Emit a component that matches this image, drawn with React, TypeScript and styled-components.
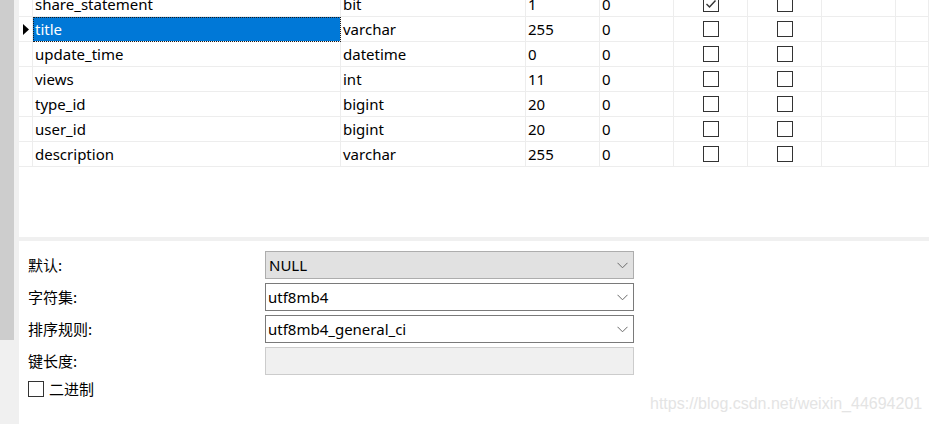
import React from "react";
import styled, { createGlobalStyle } from "styled-components";

const Global = createGlobalStyle`
  html, body { margin: 0; padding: 0; background: #f0f0f0; }
  body { width: 929px; height: 424px; overflow: hidden; font-family: "Noto Sans", "Noto Sans CJK SC", sans-serif; }
  #root { width: 929px; height: 424px; }
`;

const Frame = styled.div`
  display: flex;
  width: 929px;
  height: 424px;
  position: relative;
  overflow: hidden;
`;

const LeftStrip = styled.div`
  width: 19px;
  display: flex;
  flex-direction: column;
  flex-shrink: 0;
`;

const ScrollBlock = styled.div`
  width: 14px;
  height: 340px;
  background: #cdcdcd;
`;

const Main = styled.div`
  flex: 1;
  display: flex;
  flex-direction: column;
  gap: 4px;
`;

const GridPanel = styled.div`
  height: 237px;
  background: #ffffff;
  overflow: hidden;
`;

const GridBody = styled.div`
  margin-top: -8px;
  display: flex;
  flex-direction: column;
`;

const Row = styled.div`
  display: grid;
  grid-template-columns: 14px 308px 185px 74px 74px 74px 74px 74px 1fr;
  height: 25px;
`;

const Cell = styled.div<{ $selected?: boolean; $center?: boolean; $pad?: number }>`
  box-sizing: border-box;
  border-right: 1px solid #ededed;
  border-bottom: 1px solid #ededed;
  display: flex;
  align-items: center;
  justify-content: ${(p) => (p.$center ? "center" : "flex-start")};
  padding-left: ${(p) => p.$pad ?? 2}px;
  font-size: 15px;
  color: #000;
  white-space: nowrap;
  overflow: hidden;
  position: relative;
  ${(p) =>
    p.$selected &&
    `
    background: #0078d7;
    color: #fff;
    outline: 1px dotted #1b1b1b;
    outline-offset: -1px;
  `}
`;

const HeaderCell = styled(Cell)`
  padding-left: 4px;
`;

const Box = styled.div`
  box-sizing: border-box;
  width: 16px;
  height: 16px;
  border: 1.5px solid #333;
  background: #fff;
  display: flex;
  align-items: center;
  justify-content: center;
  flex-shrink: 0;
`;

const LowerPanel = styled.div`
  flex: 1;
  background: #ffffff;
  padding: 10px 0 0 9px;
  display: flex;
  flex-direction: column;
`;

const FormRow = styled.div`
  display: grid;
  grid-template-columns: 237px 369px;
  height: 32px;
  align-items: start;
`;

const Label = styled.div`
  font-size: 15px;
  line-height: 28px;
  height: 28px;
  color: #000;
  font-family: "Noto Sans CJK SC", sans-serif;
`;

const SelectBox = styled.div<{ $variant: "gray" | "white" | "disabled" }>`
  box-sizing: border-box;
  height: 28px;
  display: flex;
  align-items: center;
  justify-content: space-between;
  padding: 0 5px 0 ${(p) => (p.$variant === "gray" ? 3 : 2)}px;
  font-size: 15px;
  color: #000;
  background: ${(p) =>
    p.$variant === "gray" ? "#e1e1e1" : p.$variant === "white" ? "#fff" : "#f0f0f0"};
  border: 1px solid
    ${(p) =>
      p.$variant === "gray" ? "#adadad" : p.$variant === "white" ? "#7a7a7a" : "#cccccc"};
`;

const CheckRow = styled.div`
  display: flex;
  align-items: center;
  gap: 5px;
  height: 19px;
  font-size: 15px;
  font-family: "Noto Sans CJK SC", sans-serif;
`;

const Watermark = styled.div`
  position: absolute;
  left: 650px;
  top: 395px;
  font-family: "Liberation Sans", Arial, sans-serif;
  font-size: 16px;
  color: #e4e4e4;
  white-space: nowrap;
`;

const Chevron = () => (
  <svg width="11" height="7" viewBox="0 0 11 7">
    <path d="M0.5 0.8 L5.5 5.8 L10.5 0.8" fill="none" stroke="#6a6a6a" strokeWidth="1" />
  </svg>
);

const Check = () => (
  <svg width="12" height="12" viewBox="0 0 12 12">
    <path d="M1.5 6 L4.5 9 L10.5 2.5" fill="none" stroke="#333" strokeWidth="1.4" />
  </svg>
);

const Pointer = () => (
  <svg width="6" height="11" viewBox="0 0 6 11">
    <path d="M0 0 L6 5.5 L0 11 Z" fill="#000" />
  </svg>
);

type R = { name: string; type: string; len: string; dec: string; nn?: boolean };
const rows: R[] = [
  { name: "share_statement", type: "bit", len: "1", dec: "0", nn: true },
  { name: "title", type: "varchar", len: "255", dec: "0" },
  { name: "update_time", type: "datetime", len: "0", dec: "0" },
  { name: "views", type: "int", len: "11", dec: "0" },
  { name: "type_id", type: "bigint", len: "20", dec: "0" },
  { name: "user_id", type: "bigint", len: "20", dec: "0" },
  { name: "description", type: "varchar", len: "255", dec: "0" },
];

export default function App() {
  return (
    <>
      <Global />
      <Frame>
        <LeftStrip>
          <ScrollBlock />
        </LeftStrip>
        <Main>
          <GridPanel>
            <GridBody>
              {rows.map((r, i) => (
                <Row key={r.name}>
                  <HeaderCell>{i === 1 && <Pointer />}</HeaderCell>
                  <Cell $selected={i === 1}>{r.name}</Cell>
                  <Cell>{r.type}</Cell>
                  <Cell>{r.len}</Cell>
                  <Cell>{r.dec}</Cell>
                  <Cell $center $pad={0}>
                    <Box>{r.nn && <Check />}</Box>
                  </Cell>
                  <Cell $center $pad={0}>
                    <Box />
                  </Cell>
                  <Cell />
                  <Cell />
                </Row>
              ))}
            </GridBody>
          </GridPanel>
          <LowerPanel>
            <FormRow>
              <Label>默认:</Label>
              <SelectBox $variant="gray">
                NULL
                <Chevron />
              </SelectBox>
            </FormRow>
            <FormRow>
              <Label>字符集:</Label>
              <SelectBox $variant="white">
                utf8mb4
                <Chevron />
              </SelectBox>
            </FormRow>
            <FormRow>
              <Label>排序规则:</Label>
              <SelectBox $variant="white">
                utf8mb4_general_ci
                <Chevron />
              </SelectBox>
            </FormRow>
            <FormRow>
              <Label>键长度:</Label>
              <SelectBox $variant="disabled" />
            </FormRow>
            <CheckRow>
              <Box />
              二进制
            </CheckRow>
          </LowerPanel>
        </Main>
        <Watermark>https://blog.csdn.net/weixin_44694201</Watermark>
      </Frame>
    </>
  );
}
